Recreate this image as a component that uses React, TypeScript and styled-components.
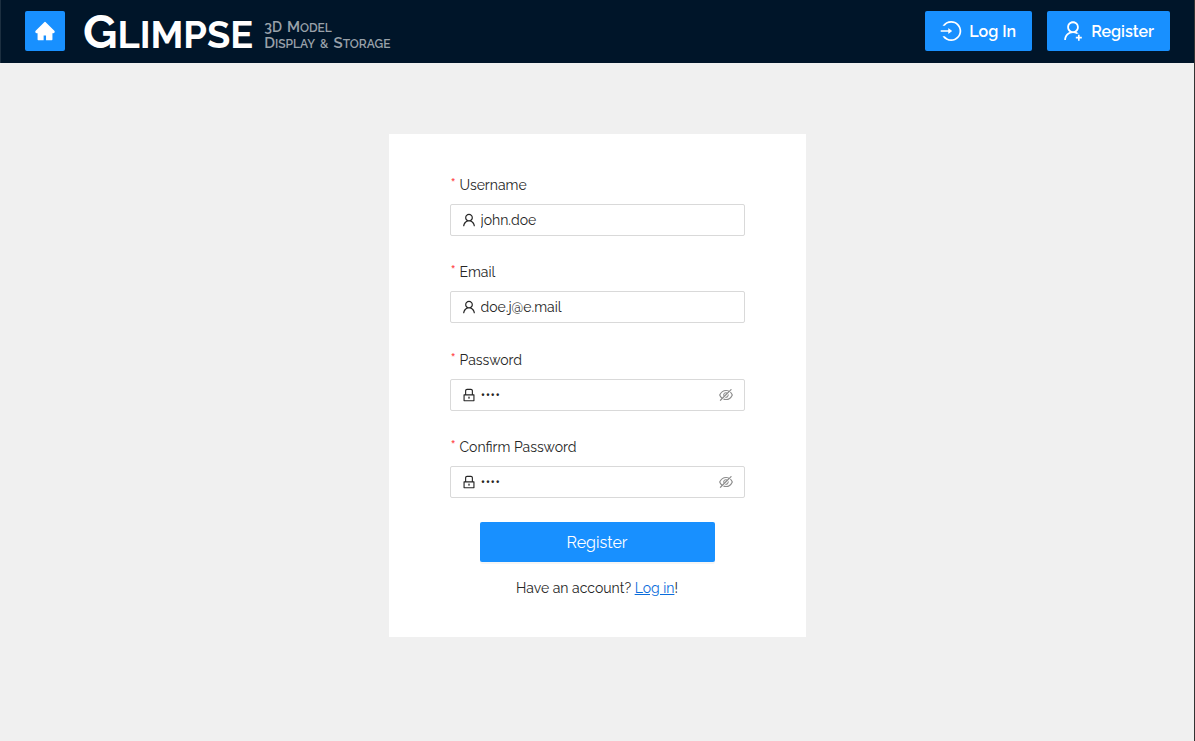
import React from "react";
import styled, { createGlobalStyle } from "styled-components";
import {
  AiFillHome,
  AiOutlineEyeInvisible,
  AiOutlineLock,
  AiOutlineLogin,
  AiOutlineUser,
  AiOutlineUserAdd,
} from "react-icons/ai";

const GlobalStyle = createGlobalStyle`
  *, *::before, *::after { box-sizing: border-box; }
  body {
    margin: 0;
    background: #f0f0f0;
    color: #262626;
    font-family: Raleway, Lato, "Open Sans", sans-serif;
    font-size: 14px;
    line-height: 22px;
  }
  input, button { font: inherit; color: inherit; }
`;

const Page = styled.div`
  min-height: 100vh;
  border-right: 1px solid #333333;
`;

const Header = styled.header`
  display: flex;
  align-items: center;
  justify-content: space-between;
  padding: 11px 24px 12px;
  background: #001529;
  border-left: 1px solid #1c2f40;
`;

const Brand = styled.div`
  display: flex;
  align-items: center;
  height: 40px;
`;

const Actions = styled.nav`
  display: flex;
  gap: 15px;
`;

const NavButton = styled.button<{ $square?: boolean }>`
  display: inline-flex;
  align-items: center;
  justify-content: center;
  gap: 6px;
  height: 40px;
  width: ${(p) => (p.$square ? "40px" : "auto")};
  padding: ${(p) => (p.$square ? "0" : "0 16px 0 14px")};
  border: 0;
  border-radius: 2px;
  background: #1890ff;
  color: #ffffff;
  font-size: 16px;
  line-height: 23px;
  font-weight: 600;
  cursor: pointer;
`;

const CapWord = styled.span<{ $full?: boolean }>`
  display: inline-block;
  text-transform: uppercase;
  font-size: ${(p) => (p.$full ? "14px" : "inherit")};
  line-height: ${(p) => (p.$full ? "1" : "inherit")};
  &::first-letter { font-size: ${(p) => (p.$full ? "100%" : "125%")}; line-height: 1; }
`;

const Title = styled.h1`
  margin: 0 0 0 18px;
  padding-top: 2px;
  color: #ffffff;
  font-size: 38px;
  line-height: 40px;
  font-weight: 700;
`;

const Tagline = styled.p`
  display: flex;
  flex-direction: column;
  margin: 9px 0 0 11px;
  color: #99a1a9;
  font-size: 12px;
  line-height: 16px;
  font-weight: 600;
`;

const TaglineRow = styled.span`
  display: flex;
  gap: 5px;
  height: 16px;
  align-items: baseline;
`;

const Main = styled.main`
  display: flex;
  justify-content: center;
  padding: 71px 16px;
`;

const Card = styled.form`
  display: flex;
  flex-direction: column;
  width: 100%;
  max-width: 417px;
  padding: 40px 61px 38px;
  background: #ffffff;
`;

const FieldGroup = styled.div`
  display: flex;
  flex-direction: column;
  gap: 25px;
  margin-bottom: 24px;
  & + & { margin-top: 2px; }
`;

const Field = styled.div`
  display: flex;
  flex-direction: column;
  gap: 8px;
`;

const Label = styled.label`
  display: flex;
  padding-left: 1px;
  &::before {
    content: "*";
    width: 9px;
    color: #ff4d4f;
    font-size: 16px;
    font-weight: 500;
  }
`;

const InputBox = styled.div`
  display: flex;
  align-items: center;
  gap: 4px;
  height: 32px;
  padding: 0 10px;
  border: 1px solid #d9d9d9;
  border-radius: 2px;
  background: #ffffff;
`;

const Input = styled.input`
  flex: 1;
  min-width: 0;
  padding: 0;
  border: 0;
  outline: 0;
  background: transparent;
`;

const EyeButton = styled.button`
  display: flex;
  padding: 0;
  border: 0;
  background: transparent;
  color: #8c8c8c;
  cursor: pointer;
`;

const Submit = styled.button`
  height: 40px;
  margin: 0 30px 15px;
  border: 0;
  border-radius: 2px;
  background: #1890ff;
  box-shadow: 0 2px 0 rgba(0, 0, 0, 0.04);
  color: #ffffff;
  font-size: 16px;
  line-height: 23px;
  font-weight: 400;
  cursor: pointer;
`;

const Hint = styled.p`
  margin: 0;
  text-align: center;
`;

const Link = styled.a`
  color: #0a6cdb;
  text-decoration: underline;
`;

interface FieldInfo {
  id: string;
  label: string;
  value: string;
  secret?: boolean;
}

const accountFields: FieldInfo[] = [
  { id: "username", label: "Username", value: "john.doe" },
  { id: "email", label: "Email", value: "doe.j@e.mail" },
];

const passwordFields: FieldInfo[] = [
  { id: "password", label: "Password", value: "pass", secret: true },
  { id: "confirm", label: "Confirm Password", value: "pass", secret: true },
];

function FormField({ id, label, value, secret }: FieldInfo) {
  return (
    <Field>
      <Label htmlFor={id}>{label}</Label>
      <InputBox>
        {secret ? <AiOutlineLock size={16} /> : <AiOutlineUser size={16} />}
        <Input id={id} type={secret ? "password" : "text"} defaultValue={value} />
        {secret && (
          <EyeButton type="button" aria-label="Show password">
            <AiOutlineEyeInvisible size={16} />
          </EyeButton>
        )}
      </InputBox>
    </Field>
  );
}

export default function App() {
  return (
    <Page>
      <GlobalStyle />
      <Header>
        <Brand>
          <NavButton $square type="button" aria-label="Home">
            <AiFillHome size={22} />
          </NavButton>
          <Title>
            <CapWord>Glimpse</CapWord>
          </Title>
          <Tagline>
            <TaglineRow>
              <CapWord $full>3D</CapWord>
              <CapWord>Model</CapWord>
            </TaglineRow>
            <TaglineRow>
              <CapWord>Display</CapWord>
              <CapWord>&amp;</CapWord>
              <CapWord>Storage</CapWord>
            </TaglineRow>
          </Tagline>
        </Brand>
        <Actions>
          <NavButton type="button">
            <AiOutlineLogin size={24} />
            Log In
          </NavButton>
          <NavButton type="button">
            <AiOutlineUserAdd size={24} />
            Register
          </NavButton>
        </Actions>
      </Header>
      <Main>
        <Card onSubmit={(e) => e.preventDefault()}>
          <FieldGroup>
            {accountFields.map((f) => (
              <FormField key={f.id} {...f} />
            ))}
          </FieldGroup>
          <FieldGroup>
            {passwordFields.map((f) => (
              <FormField key={f.id} {...f} />
            ))}
          </FieldGroup>
          <Submit type="submit">Register</Submit>
          <Hint>
            Have an account? <Link href="#login">Log in</Link>!
          </Hint>
        </Card>
      </Main>
    </Page>
  );
}
